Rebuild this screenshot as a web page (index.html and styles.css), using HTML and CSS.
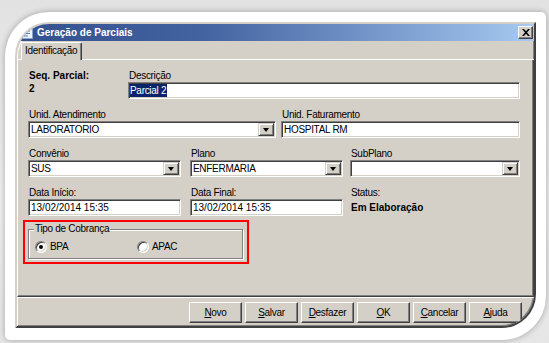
FILE: index.html
```html
<!DOCTYPE html>
<html lang="pt-BR">
<head>
<meta charset="utf-8">
<title>Geração de Parciais</title>
<link rel="stylesheet" href="styles.css">
</head>
<body>
<div class="frame">
  <div class="dialog">
    <div class="titlebar">
      <svg class="appicon" width="14" height="14" viewBox="0 0 14 14"><rect x="1.5" y="1.5" width="11" height="11" fill="#eef3fb" stroke="#8aa4cc"/><path d="M4 5h6M4 7.5h6M4 10h4" stroke="#5a7ab0"/></svg>
      <span class="title">Geração de Parciais</span>
      <span class="closebtn"><svg width="8" height="7" viewBox="0 0 8 7"><path d="M0 0h2l2 2.3L6 0h2L5 3.5 8 7H6L4 4.7 2 7H0l3-3.5z" fill="#000"/></svg></span>
    </div>
    <div class="tabs">
      <div class="tabfill lead"></div>
      <div class="tab">Identificação</div>
      <div class="tabfill"></div>
    </div>
    <div class="page">
      <div class="row">
        <div class="fld w100"><div class="lbl b">Seq. Parcial:</div><div class="val b">2</div></div>
        <div class="fld w392"><div class="lbl">Descrição</div><div class="inp"><span class="hl">Parcial 2</span></div></div>
      </div>
      <div class="row">
        <div class="fld w248"><div class="lbl">Unid. Atendimento</div><div class="inp"><span class="txt">LABORATORIO</span><span class="dd"></span></div></div>
        <div class="fld w239 g5"><div class="lbl">Unid. Faturamento</div><div class="inp"><span class="txt">HOSPITAL RM</span></div></div>
      </div>
      <div class="row">
        <div class="fld w153"><div class="lbl">Convênio</div><div class="inp"><span class="txt">SUS</span><span class="dd"></span></div></div>
        <div class="fld w153 g9"><div class="lbl">Plano</div><div class="inp"><span class="txt">ENFERMARIA</span><span class="dd"></span></div></div>
        <div class="fld w170 g7"><div class="lbl">SubPlano</div><div class="inp"><span class="txt"></span><span class="dd"></span></div></div>
      </div>
      <div class="row">
        <div class="fld w153"><div class="lbl">Data Início:</div><div class="inp"><span class="txt num">13/02/2014 15:35</span></div></div>
        <div class="fld w153 g9"><div class="lbl">Data Final:</div><div class="inp"><span class="txt num">13/02/2014 15:35</span></div></div>
        <div class="fld w170 g7"><div class="lbl">Status:</div><div class="val b st">Em Elaboração</div></div>
      </div>
      <div class="grp">
        <fieldset>
          <legend>Tipo de Cobrança</legend>
          <div class="radios">
            <div class="radio"><span class="rb on"></span><span>BPA</span></div>
            <div class="radio"><span class="rb"></span><span>APAC</span></div>
          </div>
        </fieldset>
      </div>
    </div>
    <div class="bar">
      <div class="btn"><u>N</u>ovo</div>
      <div class="btn"><u>S</u>alvar</div>
      <div class="btn"><u>D</u>esfazer</div>
      <div class="btn"><u>O</u>K</div>
      <div class="btn"><u>C</u>ancelar</div>
      <div class="btn"><u>A</u>juda</div>
    </div>
  </div>
</div>
</body>
</html>
```

FILE: styles.css
```css
* { box-sizing: border-box; margin: 0; padding: 0; }
html { background: #ececec; }
body {
  width: 549px; height: 343px; overflow: hidden;
  padding: 12px 3px 3px 5px;
  font-family: "Liberation Sans", Arial, sans-serif;
  font-size: 10px; line-height: 12px; color: #000;
  background: linear-gradient(#e2e2e2, #efefef 60%, #e6e6e6);
}
.frame {
  width: 541px; height: 328px;
  background: #fff;
  border-radius: 44px 5px 44px 5px;
  box-shadow: 0 0 6px rgba(0,0,0,.3);
  padding: 10px 10px 12px 10px;
}
.dialog {
  height: 306px;
  display: flex; flex-direction: column;
  background: #d4d0c8;
  border-radius: 34px 0 34px 0;
  overflow: hidden;
  border: 2px solid;
  border-color: #d4d0c8 #404040 #404040 #d4d0c8;
  box-shadow: inset 1px 1px #fff, inset -1px -1px #808080;
}
.titlebar {
  height: 17px; flex: none;
  display: flex; align-items: center;
  background: linear-gradient(90deg, #33518e 0%, #42619f 35%, #7b9dcf 73%, #a6caf0 100%);
  color: #fff; padding-left: 3px;
}
.appicon { margin-right: 3px; flex: none; }
.title { font-weight: bold; flex: 1; white-space: nowrap; }
.closebtn {
  width: 15px; height: 13px; margin-right: 1px;
  background: #d4d0c8;
  border: 1px solid; border-color: #fff #404040 #404040 #fff;
  box-shadow: inset -1px -1px #808080;
  display: flex; align-items: center; justify-content: center;
}
.tabs { height: 19px; flex: none; display: flex; align-items: flex-end; }
.tabfill { flex: 1; height: 1px; background: #fff; }
.tabfill.lead { flex: none; width: 4px; }
.tab {
  height: 18px; padding: 0 4px 0 3px;
  border-left: 1px solid #fff; border-top: 1px solid #fff; border-right: 1px solid #404040;
  box-shadow: inset -1px 0 #808080;
  border-radius: 2px 2px 0 0;
  line-height: 15px; letter-spacing: -0.3px; white-space: nowrap;
}
.page {
  flex: 1;
  border-left: 1px solid #fff; border-right: 1px solid #404040; border-bottom: 1px solid #404040;
  box-shadow: inset -1px -1px #808080;
  padding: 10px 0 0 10px;
}
.row { display: flex; }
.row + .row { margin-top: 10px; }
.fld { display: flex; flex-direction: column; }
.w100 { width: 100px; } .w392 { width: 392px; } .w248 { width: 248px; } .w239 { width: 239px; }
.w153 { width: 153px; } .w170 { width: 170px; }
.g5 { margin-left: 5px; } .g9 { margin-left: 9px; } .g7 { margin-left: 7px; }
.lbl { height: 12px; padding-left: 1px; white-space: nowrap; letter-spacing: -0.3px; }
.b { font-weight: bold; letter-spacing: 0; }
.val { height: 17px; padding: 1px 0 0 1px; white-space: nowrap; }
.val.st { padding-top: 3px; }
.inp {
  height: 17px; background: #fff;
  border: 1px solid; border-color: #808080 #fff #fff #808080;
  box-shadow: inset 1px 1px #404040, inset -1px -1px #d4d0c8;
  padding: 1px 1px 1px 2px;
  display: flex; line-height: 13px; white-space: nowrap;
}
.txt { flex: 1; letter-spacing: -0.3px; overflow: hidden; }
.txt.num { letter-spacing: 0; }
.hl { background: #0a246a; color: #fff; padding: 0 1px 0 0; letter-spacing: -0.3px; margin-left: -1px; }
.dd {
  width: 16px; height: 13px; flex: none;
  background: #d4d0c8;
  border: 1px solid; border-color: #d4d0c8 #404040 #404040 #d4d0c8;
  box-shadow: inset 1px 1px #fff, inset -1px -1px #808080;
  display: flex; align-items: center; justify-content: center;
}
.dd::after {
  content: ""; width: 0; height: 0;
  border-left: 3.5px solid transparent; border-right: 3.5px solid transparent;
  border-top: 4px solid #000;
}
.grp {
  width: 226px; height: 44px;
  margin: 4px 0 0 -5px;
  border: 2px solid #f00;
  padding: 1px 4px 0 3px;
}
fieldset {
  height: 36px;
  border: 1px solid #808080;
  box-shadow: inset 1px 1px #fff, 1px 1px #fff;
  padding: 5px 0 0 6px;
}
legend { padding: 0 1px; margin-left: -1px; letter-spacing: -0.3px; line-height: 12px; background: #d4d0c8; }
.radios { display: flex; }
.radio { display: flex; align-items: center; width: 102px; height: 13px; letter-spacing: -0.3px; }
.rb {
  width: 12px; height: 12px; border-radius: 50%; background: #fff;
  border: 1px solid; border-color: #808080 #fff #fff #808080;
  box-shadow: inset 1px 1px #404040, inset -1px -1px #d4d0c8;
  margin-right: 3px;
  display: flex; align-items: center; justify-content: center;
}
.rb.on::after { content: ""; width: 4px; height: 4px; border-radius: 50%; background: #000; }
.bar {
  height: 29px; flex: none;
  border-top: 1px solid #fff;
  display: flex; justify-content: flex-end; gap: 3px;
  padding: 4px 12px 0 0;
}
.btn {
  width: 53px; height: 21px;
  background: #d4d0c8;
  border: 1px solid; border-color: #fff #404040 #404040 #fff;
  box-shadow: inset -1px -1px #808080;
  text-align: center; line-height: 19px; letter-spacing: -0.3px;
}
```
